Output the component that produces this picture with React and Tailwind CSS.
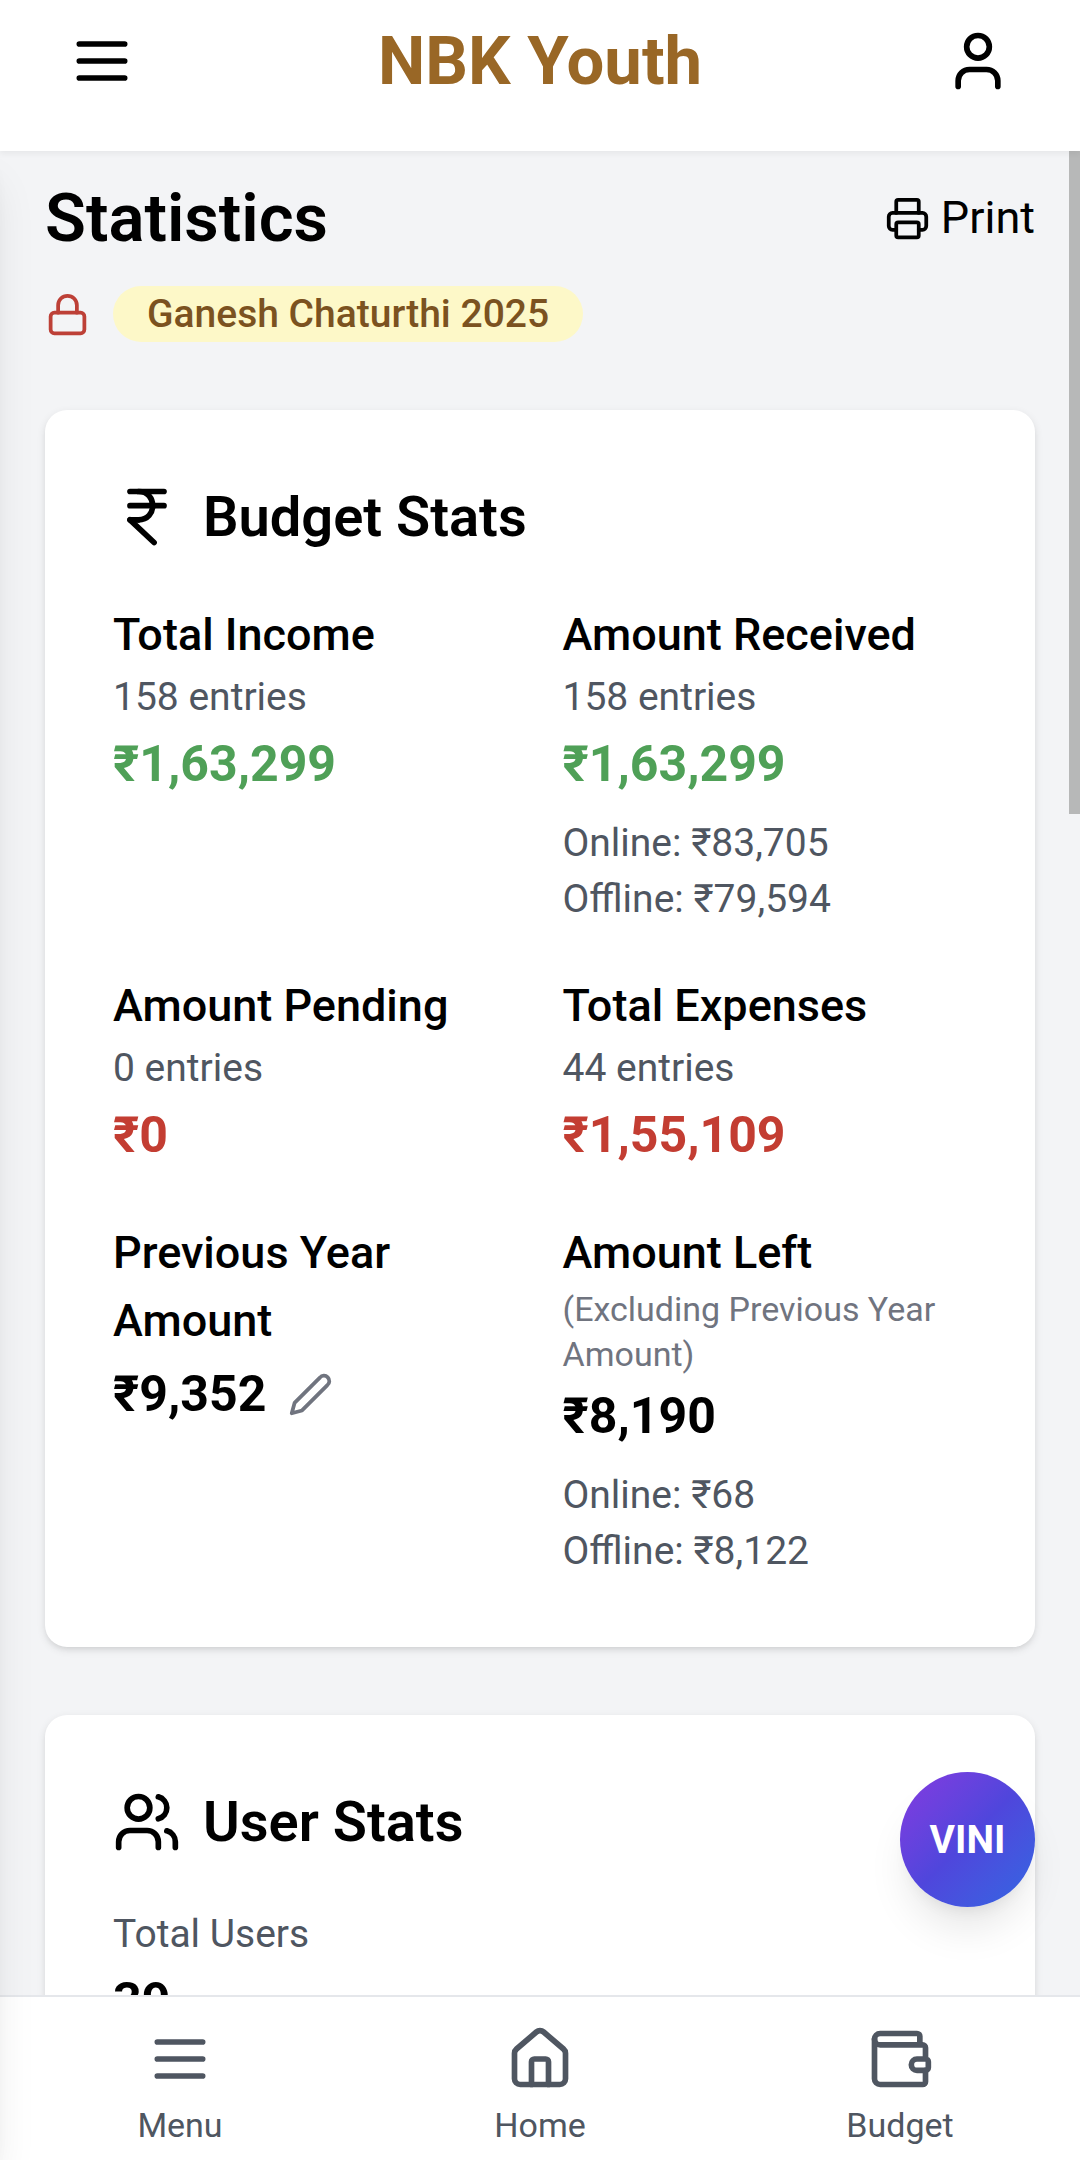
import { House, IndianRupee, Lock, Printer, User, Users, Wallet } from "lucide-react";

function MenuIcon({ className }) {
  return (
    <svg
      className={className}
      viewBox="0 0 24 24"
      fill="none"
      stroke="currentColor"
      strokeWidth="2"
      strokeLinecap="round"
      aria-hidden="true"
    >
      <path d="M4 6h16M4 12h16M4 18h16" />
    </svg>
  );
}

function PencilIcon({ className }) {
  return (
    <svg
      className={className}
      viewBox="0 0 24 24"
      fill="none"
      stroke="currentColor"
      strokeWidth="2"
      strokeLinecap="round"
      strokeLinejoin="round"
      aria-hidden="true"
    >
      <path d="M17 3a2.85 2.83 0 1 1 4 4L7.5 20.5 2 22l1.5-5.5Z" />
    </svg>
  );
}

function Card({ icon: Icon, title, children }) {
  return (
    <section className="rounded-[22px] bg-white p-[68px] shadow-[0_3px_8px_rgba(0,0,0,0.1),0_3px_6px_-3px_rgba(0,0,0,0.1)]">
      <h2 className="mb-[45px] flex items-center gap-[22px] text-[56px] leading-[78px] font-semibold">
        <Icon className="size-[68px] shrink-0" />
        {title}
      </h2>
      {children}
    </section>
  );
}

function Stat({ title, entries, note, amount, color = "text-black", online, offline, editable }) {
  return (
    <div>
      <h3 className="text-[45px] leading-[68px] font-medium">{title}</h3>
      {entries && <p className="text-[39px] leading-[56px] text-[#4f5661]">{entries}</p>}
      {note && <p className="text-[34px] leading-[45px] text-[#70747f]">{note}</p>}
      <div className="flex items-center gap-[22px]">
        <p className={"text-[50px] leading-[78px] font-bold " + color}>{amount}</p>
        {editable && (
          <button type="button" aria-label="Edit previous year amount" className="text-[#70747f]">
            <PencilIcon className="size-[45px]" />
          </button>
        )}
      </div>
      {online && (
        <div className="mt-[12px] text-[39px] leading-[56px] text-[#4f5661]">
          <p>Online: {online}</p>
          <p>Offline: {offline}</p>
        </div>
      )}
    </div>
  );
}

function NavItem({ icon: Icon, label }) {
  return (
    <a href="#" className="flex flex-1 flex-col items-center gap-[10px]">
      <Icon className="size-[68px]" />
      <span className="text-[34px] leading-[45px]">{label}</span>
    </a>
  );
}

export default function App() {
  return (
    <div className="relative flex h-screen flex-col overflow-hidden bg-[#f3f4f6] font-[Roboto,sans-serif] text-black">
      <header className="relative z-20 flex items-center justify-between bg-white px-[68px] pt-[16px] pb-[45px] shadow-[0_3px_6px_rgba(0,0,0,0.05)]">
        <button type="button" aria-label="Open menu">
          <MenuIcon className="size-[68px]" />
        </button>
        <h1 className="text-[67px] leading-[90px] font-bold text-[#996726]">NBK Youth</h1>
        <button type="button" aria-label="Profile">
          <User className="size-[68px]" />
        </button>
      </header>

      <main className="relative min-h-0 flex-1 overflow-hidden px-[45px] pt-[22px]">
        <div className="flex items-center justify-between">
          <h2 className="text-[67px] leading-[90px] font-semibold">Statistics</h2>
          <button type="button" className="flex items-center gap-[11px] text-[45px] leading-[68px]">
            <Printer className="size-[45px]" />
            Print
          </button>
        </div>
        <div className="mt-[23px] flex items-center gap-[23px]">
          <Lock className="size-[45px] text-[#bd4037]" />
          <span className="rounded-full bg-[#fdf8c8] px-[34px] text-[39px] leading-[56px] font-medium text-[#7b5220]">
            Ganesh Chaturthi 2025
          </span>
        </div>

        <div className="mt-[68px] flex flex-col gap-[68px]">
          <Card icon={IndianRupee} title="Budget Stats">
            <div className="grid grid-cols-2 gap-[45px]">
              <Stat title="Total Income" entries="158 entries" amount="₹1,63,299" color="text-[#4fa057]" />
              <Stat
                title="Amount Received"
                entries="158 entries"
                amount="₹1,63,299"
                color="text-[#4fa057]"
                online="₹83,705"
                offline="₹79,594"
              />
              <Stat title="Amount Pending" entries="0 entries" amount="₹0" color="text-[#c33d32]" />
              <Stat title="Total Expenses" entries="44 entries" amount="₹1,55,109" color="text-[#c33d32]" />
              <Stat title="Previous Year Amount" amount="₹9,352" editable />
              <Stat
                title="Amount Left"
                note="(Excluding Previous Year Amount)"
                amount="₹8,190"
                online="₹68"
                offline="₹8,122"
              />
            </div>
          </Card>

          <Card icon={Users} title="User Stats">
            <p className="text-[39px] leading-[56px] text-[#4f5661]">Total Users</p>
            <p className="text-[50px] leading-[78px] font-bold">39</p>
          </Card>
        </div>

        <div className="absolute top-0 right-0 h-[663px] w-[11px] bg-[#b7b8b8]" aria-hidden="true" />
      </main>

      <button
        type="button"
        className="absolute right-[45px] bottom-[253px] z-10 flex size-[135px] items-center justify-center rounded-full bg-linear-to-br from-[#8439e0] via-[#4f46dc] to-[#2f66e2] text-[39px] leading-[56px] font-bold text-white shadow-[0_28px_42px_-8px_rgba(0,0,0,0.1),0_11px_17px_-11px_rgba(0,0,0,0.1)]"
      >
        VINI
      </button>

      <nav className="relative flex border-t-2 border-[#e5e7eb] bg-white pt-[28px] pb-[12px] text-[#4f5661]">
        <NavItem icon={MenuIcon} label="Menu" />
        <NavItem icon={House} label="Home" />
        <NavItem icon={Wallet} label="Budget" />
      </nav>

      {/* Closed drawer waiting past the left edge; only its shadow is visible */}
      <div
        className="absolute top-[151px] right-full bottom-0 z-10 w-[720px] bg-white shadow-[0_28px_42px_-8px_rgba(0,0,0,0.1),0_11px_17px_-11px_rgba(0,0,0,0.1)]"
        aria-hidden="true"
      />
    </div>
  );
}
